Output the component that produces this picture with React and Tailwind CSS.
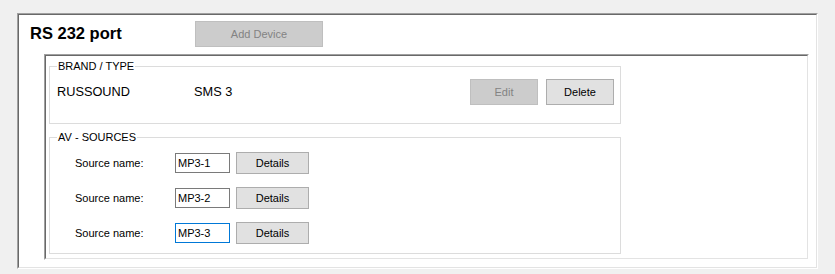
import React from 'react';

const sources = [
  { name: 'MP3-1', focused: false },
  { name: 'MP3-2', focused: false },
  { name: 'MP3-3', focused: true },
];

function Btn({ children, disabled, className = '' }) {
  return (
    <button
      disabled={disabled}
      className={`flex items-center justify-center border text-[11px] leading-none ${
        disabled
          ? 'bg-[#cccccc] border-[#bfbfbf] text-[#838383]'
          : 'bg-[#e1e1e1] border-[#adadad] text-black'
      } ${className}`}
    >
      {children}
    </button>
  );
}

// sunken 3D frame, two layers of border
function Sunken({ className = '', children }) {
  return (
    <div className={`border-t border-l border-t-[#a0a0a0] border-l-[#a0a0a0] border-r border-b border-r-white border-b-white ${className}`}>
      <div className="h-full w-full border-t border-l border-t-[#696969] border-l-[#696969] border-r border-b border-r-[#e3e3e3] border-b-[#e3e3e3] bg-white">
        {children}
      </div>
    </div>
  );
}

export default function App() {
  return (
    <div className="w-[835px] h-[274px] bg-[#f0f0f0] pt-[13px] pl-[17px] font-['Liberation_Sans',Arial,sans-serif] text-black">
      <Sunken className="w-[801px] h-[256px]">
        {/* Header */}
        <div className="h-[39px] flex items-start pl-[11px]">
          <div className="w-[165px] mt-[8px] text-[16.5px] leading-[20px] font-bold">RS 232 port</div>
          <Btn disabled className="mt-[6px] w-[128px] h-[26px]">Add Device</Btn>
        </div>

        {/* Device panel */}
        <Sunken className="ml-[25px] w-[765px] h-[206px]">
          <div className="pt-[4px] pl-[3px]">
            <fieldset className="w-[572px] border border-[#dcdcdc]">
              <legend className="ml-[7px] px-[1px] text-[11px] leading-[12px]">BRAND / TYPE</legend>
              <div className="flex items-center pt-[7px] pb-[18px] pl-[7px] pr-[6px]">
                <div className="w-[137px] text-[12.75px]">RUSSOUND</div>
                <div className="flex-1 text-[12.75px]">SMS 3</div>
                <Btn disabled className="w-[68px] h-[26px]">Edit</Btn>
                <Btn className="ml-[8px] w-[68px] h-[26px]">Delete</Btn>
              </div>
            </fieldset>

            <fieldset className="mt-[7px] w-[572px] border border-[#dcdcdc]">
              <legend className="ml-[7px] px-[1px] text-[11px] leading-[12px]">AV - SOURCES</legend>
              <div className="flex flex-col gap-[13px] pt-[9px] pb-[9px] pl-[25px]">
                {sources.map((s) => (
                  <div key={s.name} className="flex items-center h-[22px]">
                    <div className="w-[100px] text-[11px]">Source name:</div>
                    <input
                      readOnly
                      value={s.name}
                      className={`w-[55px] h-[20px] border pl-[2px] text-[11px] bg-white outline-none ${
                        s.focused ? 'border-[#0078d7]' : 'border-[#7a7a7a]'
                      }`}
                    />
                    <Btn className="ml-[6px] w-[73px] h-[22px]">Details</Btn>
                  </div>
                ))}
              </div>
            </fieldset>
          </div>
        </Sunken>
      </Sunken>
    </div>
  );
}
